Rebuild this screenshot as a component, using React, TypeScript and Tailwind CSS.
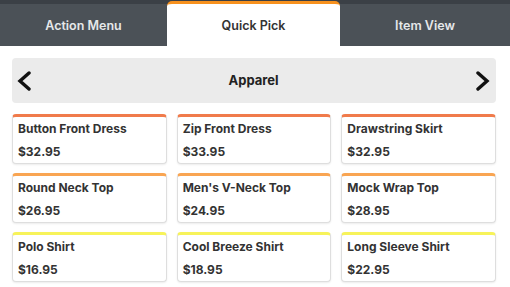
import React from 'react';

type Item = { name: string; price: string };

const rows: { color: string; items: Item[] }[] = [
  {
    color: 'border-t-[#f07b4b]',
    items: [
      { name: 'Button Front Dress', price: '$32.95' },
      { name: 'Zip Front Dress', price: '$33.95' },
      { name: 'Drawstring Skirt', price: '$32.95' },
    ],
  },
  {
    color: 'border-t-[#f9a552]',
    items: [
      { name: 'Round Neck Top', price: '$26.95' },
      { name: "Men's V-Neck Top", price: '$24.95' },
      { name: 'Mock Wrap Top', price: '$28.95' },
    ],
  },
  {
    color: 'border-t-[#f7f35a]',
    items: [
      { name: 'Polo Shirt', price: '$16.95' },
      { name: 'Cool Breeze Shirt', price: '$18.95' },
      { name: 'Long Sleeve Shirt', price: '$22.95' },
    ],
  },
];

const Chevron = ({ dir }: { dir: 'left' | 'right' }) => (
  <svg width="16" height="20" viewBox="0 0 16 20" fill="none">
    <path
      d={dir === 'left' ? 'M13 2 L4 10 L13 18' : 'M3 2 L12 10 L3 18'}
      stroke="#111"
      strokeWidth="3.4"
      strokeLinecap="round"
      strokeLinejoin="miter"
    />
  </svg>
);

export default function App() {
  return (
    <div className="w-[510px] h-[287px] bg-white overflow-hidden font-['Inter',sans-serif]">
      {/* tabs */}
      <div className="flex h-[46px] bg-[#4b5157] border-t-[4px] border-t-[#3b4046]">
        <div className="w-[167px] pt-[2px] flex items-center justify-center text-[12.5px] font-semibold text-[#e6e8ea]">
          Action Menu
        </div>
        <div className="w-[173px] -mt-[3px] pt-[2px] flex items-center justify-center bg-white rounded-t-[5px] border-t-[3px] border-t-[#f7911e] text-[12.5px] font-semibold text-[#333]">
          Quick Pick
        </div>
        <div className="flex-1 pt-[2px] flex items-center justify-center text-[12.5px] font-semibold text-[#e6e8ea]">
          Item View
        </div>
      </div>

      <div className="pl-[12px] pr-[14px] pt-[12px]">
        {/* category */}
        <div className="h-[45px] bg-[#ebebeb] rounded-[4px] flex items-center justify-between pl-[4px] pr-[5px]">
          <Chevron dir="left" />
          <span className="text-[13px] font-bold text-[#222]">Apparel</span>
          <Chevron dir="right" />
        </div>

        {/* items */}
        <div className="grid grid-cols-3 gap-x-[10px] gap-y-[9px] mt-[11px]">
          {rows.map((row) =>
            row.items.map((it) => (
              <div
                key={it.name}
                className={`h-[50px] bg-white rounded-[4px] border border-[#dedede] border-t-[3px] ${row.color} shadow-[0_1px_2px_rgba(0,0,0,0.08)] px-[5px] pt-[4px]`}
              >
                <div className="text-[12px] font-bold text-[#333] leading-[16px]">{it.name}</div>
                <div className="text-[12px] font-bold text-[#333] leading-[16px] mt-[7px]">{it.price}</div>
              </div>
            ))
          )}
        </div>
      </div>
    </div>
  );
}
